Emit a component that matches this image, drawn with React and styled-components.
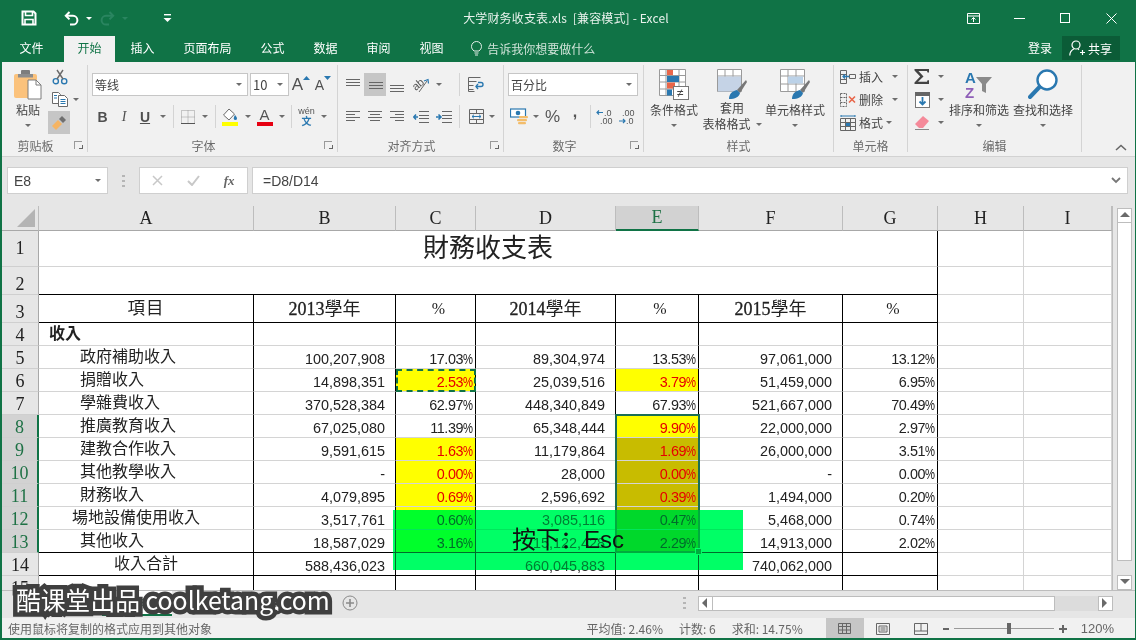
import React from 'react';
import styled, { createGlobalStyle } from 'styled-components';

const GREEN = '#107346';
const BLUE = '#2a78b0';
const UI = `"Noto Sans CJK SC", "Noto Sans", sans-serif`;
const TC = `"Noto Sans CJK TC", sans-serif`;
const SERIF = `"Liberation Serif", "Noto Sans CJK TC", serif`;

const GlobalStyle = createGlobalStyle`
  html, body { margin: 0; padding: 0; background: #fff; }
  body { font-family: ${UI}; }
`;

const Window = styled.div`
  position: relative;
  width: 1136px;
  height: 640px;
  box-sizing: border-box;
  border-left: 2px solid ${GREEN};
  border-right: 1px solid ${GREEN};
  border-bottom: 2px solid ${GREEN};
  display: flex;
  flex-direction: column;
  overflow: hidden;
  background: #e6e6e6;
`;

/* title bar */
const TitleBar = styled.div`
  height: 36px;
  flex: none;
  background: ${GREEN};
  display: grid;
  grid-template-columns: 1fr auto 1fr;
  align-items: center;
  padding-right: 5px;
  color: #fff;
`;
const Qat = styled.div`
  display: flex;
  align-items: center;
  padding-left: 18px;
`;
const QatSlot = styled.div`
  width: ${p => p.$w}px;
  height: 24px;
  display: flex;
  align-items: center;
  justify-content: center;
`;
const TitleText = styled.div`
  font-size: 12px;
  color: #e8f2ec;
  letter-spacing: 0.15px;
  white-space: pre;
  padding-bottom: 2px;
`;
const WinButtons = styled.div`
  display: flex;
  justify-content: flex-end;
  align-items: center;
  margin-right: -4px;
`;
const WinButton = styled.div`
  width: 46px;
  height: 30px;
  display: flex;
  align-items: center;
  justify-content: center;
`;

/* tabs */
const TabBar = styled.div`
  height: 26px;
  flex: none;
  background: ${GREEN};
  display: flex;
  align-items: stretch;
  padding-left: 4px;
  gap: 2px;
`;
const Tab = styled.div`
  padding: 0 13.5px;
  font-size: 12px;
  line-height: 24px;
  color: ${p => (p.$active ? GREEN : '#fff')};
  background: ${p => (p.$active ? '#f1f1f1' : 'transparent')};
  &:first-child {
    margin-right: 5px;
  }
`;
const Tell = styled.div`
  display: flex;
  align-items: center;
  gap: 5px;
  margin-left: 12px;
  font-size: 12px;
  color: #cfe3d8;
  padding-bottom: 2px;
`;
const TabRight = styled.div`
  margin-left: auto;
  display: flex;
  align-items: flex-start;
  padding-right: 15px;
  color: #fff;
  font-size: 12px;
`;
const Login = styled.div`
  line-height: 24px;
  margin-right: 10px;
`;
const Share = styled.div`
  width: 58px;
  height: 24px;
  background: #0b5c37;
  display: flex;
  align-items: center;
  gap: 3px;
  padding-left: 7px;
  box-sizing: border-box;
`;

/* ribbon */
const Ribbon = styled.div`
  height: 95px;
  flex: none;
  box-sizing: border-box;
  background: #f1f1f1;
  border-bottom: 1px solid #d2d2d2;
  display: flex;
  padding-top: 3px;
  position: relative;
`;
const Group = styled.div`
  width: ${p => p.$w}px;
  flex: none;
  box-sizing: border-box;
  height: 87px;
  border-right: 1px solid #d4d4d4;
  display: flex;
  flex-direction: column;
`;
const GroupBody = styled.div`
  height: 73px;
  display: flex;
  flex-direction: ${p => (p.$col ? 'column' : 'row')};
  gap: ${p => p.$gap || 0}px;
  padding: ${p => p.$pad || '0'};
  box-sizing: border-box;
`;
const GroupFoot = styled.div`
  height: 14px;
  display: grid;
  grid-template-columns: ${p => (p.$launch ? '1fr auto 1fr 18px' : '1fr auto 1fr')};
  align-items: center;
  font-size: 12px;
  line-height: 13px;
  color: #6b6b6b;
`;
const Launcher = styled.div`
  grid-column: 4;
  justify-self: end;
  margin-right: 5px;
  width: 7px;
  height: 7px;
  border-left: 1px solid #999;
  border-top: 1px solid #999;
  position: relative;
  &::after {
    content: '';
    position: absolute;
    right: -1px;
    bottom: 0;
    width: 3px;
    height: 3px;
    border-right: 1px solid #666;
    border-bottom: 1px solid #666;
  }
`;
const Row = styled.div`
  display: flex;
  align-items: center;
  height: ${p => p.$h || 23}px;
`;
const Slot = styled.div`
  width: ${p => p.$w}px;
  height: 23px;
  flex: none;
  display: flex;
  align-items: center;
  justify-content: center;
  background: ${p => (p.$on ? '#c6c6c6' : 'transparent')};
  color: #444;
`;
const Caret = styled.i`
  display: block;
  flex: none;
  width: 0;
  height: 0;
  border-left: 3.5px solid transparent;
  border-right: 3.5px solid transparent;
  border-top: 3.5px solid #6d6d6d;
  margin: ${p => p.$m || '0'};
`;
const CaretSlot = styled.div`
  width: ${p => p.$w || 12}px;
  flex: none;
  display: flex;
  justify-content: center;
`;
const Sep = styled.div`
  width: 1px;
  height: 23px;
  flex: none;
  background: #d4d4d4;
  margin: 0 ${p => p.$mr || 4}px 0 ${p => p.$ml || 4}px;
`;
const Combo = styled.div`
  width: ${p => p.$w}px;
  height: 23px;
  box-sizing: border-box;
  flex: none;
  background: #fff;
  border: 1px solid #c6c6c6;
  display: flex;
  align-items: center;
  justify-content: space-between;
  padding: 0 5px 0 2px;
  font-size: ${p => p.$fs || 12}px;
  color: #444;
  margin-right: ${p => p.$mr || 0}px;
`;
const Big = styled.div`
  width: ${p => p.$w}px;
  flex: none;
  display: flex;
  flex-direction: column;
  align-items: center;
  font-size: 12px;
  line-height: 16px;
  color: #444;
  white-space: nowrap;
`;
const BigIcon = styled.div`
  height: 32px;
  margin-top: 4px;
  margin-bottom: 1px;
  display: flex;
  align-items: center;
`;
const BigLine = styled.div`
  display: flex;
  align-items: center;
  gap: 5px;
  height: 16px;
  position: relative;
  top: -2px;
`;
const SmallLabel = styled.span`
  font-size: 12px;
  color: #444;
  margin-left: 2px;
  width: 24px;
`;
const FontA = styled.span`
  font-family: "Liberation Sans", sans-serif;
  font-size: ${p => p.$s}px;
  color: #505050;
`;
const StyleLetter = styled.span`
  font-family: ${p => (p.$serif ? '"Liberation Serif", serif' : '"Liberation Sans", sans-serif')};
  font-size: 14px;
  font-weight: ${p => (p.$bold ? 700 : 400)};
  font-style: ${p => (p.$italic ? 'italic' : 'normal')};
  text-decoration: ${p => (p.$under ? 'underline' : 'none')};
  color: #505050;
`;
const GlyphBtn = styled.span`
  font-family: "Liberation Sans", sans-serif;
  font-size: ${p => p.$s || 17}px;
  font-weight: ${p => p.$w || 400};
  color: #555;
  margin-bottom: ${p => p.$up || 0}px;
`;
const Collapse = styled.div`
  position: absolute;
  right: 8px;
  bottom: 5px;
  display: flex;
`;

/* formula bar */
const FormulaBar = styled.div`
  height: 49px;
  flex: none;
  box-sizing: border-box;
  padding: 10px 7px 0 5px;
  display: flex;
  align-items: flex-start;
`;
const NameBox = styled.div`
  width: 101px;
  height: 27px;
  box-sizing: border-box;
  flex: none;
  background: #fff;
  border: 1px solid #cfcfcf;
  display: flex;
  align-items: center;
  justify-content: space-between;
  padding: 0 6px;
  font-family: "Liberation Sans", sans-serif;
  font-size: 14px;
  color: #444;
`;
const Grip = styled.div`
  width: 31px;
  height: 27px;
  flex: none;
  display: flex;
  align-items: center;
  justify-content: center;
`;
const FxBox = styled.div`
  width: 109px;
  height: 27px;
  box-sizing: border-box;
  flex: none;
  background: #fff;
  border: 1px solid #cfcfcf;
  display: grid;
  grid-template-columns: 1fr 1fr 1fr;
  align-items: center;
  justify-items: center;
  margin-right: 4px;
`;
const FxText = styled.span`
  font-family: "Liberation Serif", serif;
  font-style: italic;
  font-weight: 700;
  font-size: 13px;
  color: #666;
`;
const FormulaInput = styled.div`
  flex: 1;
  height: 27px;
  box-sizing: border-box;
  background: #fff;
  border: 1px solid #cfcfcf;
  display: flex;
  align-items: center;
  justify-content: space-between;
  padding: 0 6px 0 10px;
  font-family: "Liberation Sans", sans-serif;
  font-size: 14px;
  color: #444;
`;

/* sheet */
const Stage = styled.div`
  height: 384px;
  flex: none;
  display: flex;
  overflow: hidden;
`;
const Sheet = styled.div`
  display: grid;
  grid-template-columns: 37px 215px 142px 80px 140px 83px 144px 95px 86px 88px;
  grid-template-rows: 25px 36px 28px 28px repeat(11, 23px) 23px;
  width: 1110px;
  flex: none;
  background: #fff;
  border-right: 1px solid #bdbdbd;
  align-self: flex-start;
`;
const Corner = styled.div`
  background: #e6e6e6;
  border-bottom: 1px solid #a8a8a8;
  border-right: 1px solid #bdbdbd;
  display: flex;
  align-items: flex-end;
  justify-content: flex-end;
  padding: 0 3px 3px 0;
  box-sizing: border-box;
`;
const ColHead = styled.div`
  background: ${p => (p.$on ? '#d2d2d2' : '#e6e6e6')};
  color: ${p => (p.$on ? '#1e7145' : '#222')};
  border-right: 1px solid #bdbdbd;
  border-bottom: ${p => (p.$on ? `2px solid ${GREEN}` : '1px solid #a8a8a8')};
  box-sizing: border-box;
  font-family: ${SERIF};
  font-size: 18px;
  display: flex;
  align-items: center;
  justify-content: center;
`;
const RowHead = styled.div`
  background: ${p => (p.$on ? '#d2d2d2' : '#e6e6e6')};
  color: ${p => (p.$on ? '#1e7145' : '#222')};
  border-right: ${p => (p.$on ? `2px solid ${GREEN}` : '1px solid #a8a8a8')};
  border-bottom: 1px solid #cfcfcf;
  box-sizing: border-box;
  font-family: ${SERIF};
  font-size: 18px;
  display: flex;
  align-items: ${p => (p.$mid ? 'center' : 'flex-end')};
  justify-content: center;
  line-height: 19px;
`;
const Cell = styled.div`
  box-sizing: border-box;
  position: relative;
  grid-column: ${p => (p.$span ? `span ${p.$span}` : 'auto')};
  background: ${p => p.$bg || '#fff'};
  color: ${p => p.$color || '#222'};
  border-right: 1px solid ${p => (p.$rb ? '#000' : '#d4d4d4')};
  border-bottom: 1px solid ${p => (p.$bb ? '#000' : '#d4d4d4')};
  font-size: 14.4px;
  line-height: 1;
  font-family: "Liberation Sans", sans-serif;
  display: flex;
  align-items: flex-end;
  justify-content: flex-end;
  padding: 0 ${p => p.$pr ?? 10}px 2px 0;
  white-space: nowrap;
  &.ants {
    outline: 2px dashed ${GREEN};
    outline-offset: -2px;
    z-index: 1;
  }
`;
const Caption = styled(Cell)`
  font-family: ${TC};
  font-size: 16px;
  font-weight: ${p => (p.$bold ? 700 : 400)};
  align-items: center;
  justify-content: ${p => (p.$center ? 'center' : 'flex-start')};
  padding: 0 0 4px ${p => p.$pl || 0}px;
`;
const Title = styled(Caption)`
  font-size: 26px;
  justify-content: center;
  padding: 0 0 5px;
`;
const HeadCell = styled(Cell)`
  font-family: ${SERIF};
  font-size: 18px;
  justify-content: center;
  align-items: center;
  padding: 0;
`;
const ItemHead = styled.span`
  letter-spacing: 1px;
  font-size: 17.5px;
`;
const YearNum = styled.span`
  -webkit-text-stroke: 0.3px #222;
`;
const PctHead = styled(HeadCell)`
  font-size: 16px;
  padding-left: 6px;
`;
const PctDigits = styled.span`
  letter-spacing: -0.45px;
`;
const PctSign = styled.span`
  display: inline-block;
  width: 10px;
  transform: scaleX(0.78);
  transform-origin: left bottom;
`;
const SelectBox = styled.div`
  position: absolute;
  left: -1px;
  top: -1px;
  width: 85px;
  height: 139px;
  box-sizing: border-box;
  border: 2px solid #1a6e55;
  pointer-events: none;
  z-index: 2;
`;
const FillHandle = styled.div`
  position: absolute;
  right: -4px;
  bottom: -4px;
  width: 5px;
  height: 5px;
  background: #1a6e55;
  border: 1px solid #fff;
`;

const VScroll = styled.div`
  width: 15px;
  margin-left: 4px;
  padding-top: 2px;
  display: flex;
  flex-direction: column;
`;
const ScrollBtn = styled.div`
  flex: none;
  width: ${p => p.$w || 15}px;
  height: 15px;
  box-sizing: border-box;
  background: #fff;
  border: 1px solid #bdbdbd;
  display: flex;
  align-items: center;
  justify-content: center;
`;
const VThumb = styled.div`
  flex: 1;
  background: #fff;
  border: 1px solid #bdbdbd;
  border-top: 0;
  margin-bottom: 14px;
`;

/* sheet tabs + scrollbar */
const SheetBar = styled.div`
  height: 28px;
  flex: none;
  box-sizing: border-box;
  display: flex;
  align-items: center;
  padding-bottom: 3px;
  border-top: 1px solid #bdbdbd;
  font-size: 12px;
  color: #444;
`;
const SheetTab = styled.div`
  width: 70px;
  height: 25px;
  box-sizing: border-box;
  display: flex;
  align-items: center;
  justify-content: center;
  font-family: "Liberation Sans", sans-serif;
  background: ${p => (p.$active ? '#fff' : 'transparent')};
  color: ${p => (p.$active ? GREEN : '#444')};
  border-bottom: ${p => (p.$active ? `2px solid ${GREEN}` : '0')};
`;
const Tabs = styled.div`
  display: flex;
  padding-left: 100px;
  width: 238px;
  flex: none;
`;
const AddSheet = styled.div`
  margin-left: 2px;
  display: flex;
`;
const HScroll = styled.div`
  margin-left: auto;
  margin-right: 22px;
  display: flex;
  align-items: center;
`;
const HGap = styled.span`
  width: 12px;
`;
const HThumb = styled.div`
  width: 342px;
  height: 15px;
  box-sizing: border-box;
  background: #fff;
  border-top: 1px solid #bdbdbd;
  border-bottom: 1px solid #bdbdbd;
  border-right: 1px solid #bdbdbd;
`;
const HTrack = styled.div`
  width: 43px;
  height: 15px;
  background: #dcdcdc;
`;

/* status bar */
const StatusBar = styled.div`
  height: 21px;
  flex: none;
  background: #f1f1f1;
  display: flex;
  align-items: center;
  font-size: 12px;
  color: #666;
  padding: 0 0 1px 6px;
`;
const StatusInfo = styled.div`
  margin-left: auto;
  display: flex;
  gap: 16px;
  margin-right: 23px;
  font-family: ${UI};
`;
const ViewBtn = styled.div`
  width: 38px;
  height: 21px;
  display: flex;
  align-items: center;
  justify-content: center;
  background: ${p => (p.$on ? '#c6c6c6' : 'transparent')};
`;
const Zoomer = styled.div`
  display: flex;
  align-items: center;
  margin-left: 3px;
  color: #666;
`;
const Track = styled.div`
  width: 100px;
  height: 1px;
  background: #9a9a9a;
  margin: 0 5px;
  display: flex;
  align-items: center;
  justify-content: center;
`;
const Knob = styled.div`
  width: 4px;
  height: 11px;
  background: #666;
  flex: none;
  margin-left: 10px;
`;
const ZoomPct = styled.span`
  margin-left: 14px;
  margin-right: 21px;
  font-family: "Liberation Sans", sans-serif;
  font-size: 13px;
`;

/* overlays */
const HintTint = styled.div`
  position: absolute;
  left: 391px;
  top: 510px;
  width: 350px;
  height: 60px;
  background: #00ff66;
  mix-blend-mode: multiply;
  z-index: 5;
`;
const KeyHint = styled.div`
  position: absolute;
  left: 391px;
  top: 510px;
  width: 350px;
  height: 60px;
  background: rgba(0, 255, 102, 0.42);
  color: #111;
  font-family: "Liberation Sans", ${UI};
  font-size: 24px;
  line-height: 60px;
  text-align: center;
  z-index: 5;
`;
const Watermark = styled.div`
  position: absolute;
  left: 14px;
  top: 580px;
  font-size: 24.8px;
  line-height: 38px;
  color: #fff;
  white-space: pre;
  -webkit-text-stroke: 9px #3f3f3f;
  paint-order: stroke fill;
  stroke-linejoin: round;
  z-index: 6;
`;

/* icons */
const SaveIcon = () => (
  <svg width="16" height="16" viewBox="0 0 16 16" fill="none" stroke="#fff" strokeWidth="2">
    <path d="M1.5 1.5h11l2 2v11h-13z" />
    <path d="M4.5 1.5v4h7v-4M4 14.5v-5h8v5" strokeWidth="1.6" />
  </svg>
);
const UndoIcon = ({ c = '#fff', flip }) => (
  <svg width="16" height="15" viewBox="0 0 16 15" fill="none" stroke={c} strokeWidth="2" style={flip ? { transform: 'scaleX(-1)' } : undefined}>
    <path d="M5.5 1 1.8 4.8l3.7 3.6" />
    <path d="M2 4.8h7a4.4 4.4 0 0 1 0 8.8H6" />
  </svg>
);
const QatCaret = styled(Caret)`
  border-top-color: ${p => p.$c || '#fff'};
`;
const CustomizeIcon = () => (
  <svg width="9" height="9" viewBox="0 0 9 9" fill="#fff">
    <rect x="1" y="0" width="7" height="1.4" />
    <path d="M0.5 4h8L4.5 8z" />
  </svg>
);
const PasteIcon = () => (
  <svg width="30" height="32" viewBox="0 0 30 32">
    <rect x="1" y="5" width="23" height="24" rx="2" fill="#fbc27c" />
    <rect x="8" y="1" width="9" height="7" rx="1" fill="#7d7d7d" />
    <rect x="5" y="5" width="15" height="3.5" fill="#8d8d8d" />
    <path d="M15 11h8l5 5v14H15z" fill="#fff" stroke="#7d7d7d" />
    <path d="M23 11v5h5" fill="none" stroke="#7d7d7d" />
  </svg>
);
const ScissorsIcon = () => (
  <svg width="16" height="16" viewBox="0 0 16 16" fill="none">
    <circle cx="3.8" cy="12.2" r="2.6" stroke={BLUE} strokeWidth="1.4" />
    <circle cx="12.2" cy="12.2" r="2.6" stroke={BLUE} strokeWidth="1.4" />
    <path d="M5 10 11 1M11 10 5 1" stroke="#6a6a6a" strokeWidth="1.4" />
  </svg>
);
const CopyIcon = () => (
  <svg width="16" height="15" viewBox="0 0 16 15" fill="#fff" stroke="#6a6a6a">
    <path d="M.5.5h6l2 2v9H.5z" />
    <path d="M6.5 3.5h6l3 3v8h-9z" />
    <path d="M2 3.5h3M2 6h3M8.500 7.500h5M8.500 9.500h5M8.500 11.500h5" stroke={BLUE} />
  </svg>
);
const PainterIcon = () => (
  <svg width="16" height="16" viewBox="0 0 16 16">
    <path d="M1 11 7 5l4 4-6 6z" fill="#f5b463" />
    <path d="M8 4l3-3 4 4-3 3z" fill="#6f6f6f" />
  </svg>
);
const CaretUp = ({ c = BLUE }) => (
  <svg width="7" height="5" viewBox="0 0 7 5" style={{ alignSelf: 'flex-start', marginTop: 3 }}><path d="M0 4h7L3.5 0z" fill={c} /></svg>
);
const CaretDownBlue = () => (
  <svg width="7" height="5" viewBox="0 0 7 5" style={{ alignSelf: 'flex-start', marginTop: 3 }}><path d="M0 0h7L3.500 4z" fill={BLUE} /></svg>
);
const BordersIcon = () => (
  <svg width="14" height="14" viewBox="0 0 14 14" fill="none" stroke="#999" strokeDasharray="1 1">
    <path d="M.5.500h13v13H.5zM7 .5v13M.5 7h13" />
    <path d="M0 13.500h14" strokeDasharray="none" stroke="#555" />
  </svg>
);
const FillIcon = () => (
  <svg width="18" height="18" viewBox="0 0 18 18">
    <path d="M7 1 1.5 7 7 12l5.500-6z" fill="#fff" stroke="#6a6a6a" />
    <path d="M13 7s2 2.200 2 3.400a1.600 1.600 0 0 1-3.200 0C11.800 9.200 13 7 13 7z" fill={BLUE} />
    <rect x="0" y="14" width="16" height="4" fill="#ffff00" />
  </svg>
);
const ColorWrap = styled.div`
  display: block;
`;
const ColorA = styled.span`
  display: block;
  font-family: "Liberation Sans", sans-serif;
  font-size: 15px;
  line-height: 14px;
  text-align: center;
  color: #555;
  width: 16px;
`;
const ColorBar = styled.div`
  width: 16px;
  height: 4px;
  background: #e60012;
`;
const FontColorIcon = () => (
  <ColorWrap>
    <ColorA>A</ColorA>
    <ColorBar />
  </ColorWrap>
);
const WenText = styled.div`
  font-family: "Liberation Sans", sans-serif;
  font-size: 9px;
  line-height: 9px;
  color: #555;
  text-align: center;
`;
const WenChar = styled.div`
  font-size: 10px;
  line-height: 10px;
  color: ${BLUE};
  text-align: center;
  font-weight: 700;
`;
const LinesIcon = ({ rows, w = 15, h = 20 }) => (
  <svg width={w} height={h} viewBox={`0 0 ${w} ${h}`} stroke="#666">
    {rows.map(([a, b, y], i) => <line key={i} x1={a} x2={b} y1={y + 0.5} y2={y + 0.5} />)}
  </svg>
);
const OrientText = styled.span`
  display: block;
  font-family: "Liberation Sans", sans-serif;
  font-size: 11px;
  line-height: 11px;
  color: #555;
  transform: rotate(-40deg);
  margin-right: -6px;
`;
const OrientIcon = () => (
  <>
    <OrientText>ab</OrientText>
    <svg width="12" height="16" viewBox="0 0 12 16" fill="none">
      <path d="M1 15 9 4" stroke="#666" />
      <path d="M6 4l4-1.500.5 4" stroke={BLUE} strokeWidth="1.200" />
    </svg>
  </>
);
const WrapIcon = () => (
  <svg width="16" height="15" viewBox="0 0 16 15" fill="none" stroke="#666">
    <path d="M.5.500h12M.5 4.500h8M.5 8.500h5M.5 12.500h5" />
    <path d="M.5.500v14h6" />
    <path d="M8 9.500h5a2 2 0 0 0 0-4H10" stroke={BLUE} strokeWidth="1.400" />
    <path d="M10 7 8 9.500l2 2.500" stroke={BLUE} strokeWidth="1.400" />
  </svg>
);
const MergeIcon = () => (
  <svg width="15" height="15" viewBox="0 0 15 15" fill="none" stroke="#666">
    <path d="M.5.500h14v14H.5zM.5 4.500h14M.5 10.500h14M7.500.500v4M7.500 10.500v4" />
    <path d="M3 7.500h9M5 5.700 3 7.500l2 1.800M10 5.700l2 1.800-2 1.800" stroke={BLUE} />
  </svg>
);
const IndentIcon = ({ out }) => (
  <svg width="16" height="12" viewBox="0 0 16 12" fill="none">
    <path d="M6 .500h10M6 4.500h10M6 7.500h10M6 11.500h10" stroke="#666" />
    <path d={out ? 'M5 6H1M3 3.500 .8 6 3 8.500' : 'M0 6h4.500M2.500 3.500 5 6 2.500 8.500'} stroke={BLUE} strokeWidth="1.600" />
  </svg>
);
const CurrencyIcon = () => (
  <svg width="19" height="17" viewBox="0 0 19 17">
    <rect x=".5" y="1" width="15" height="8" fill="#fff" stroke={BLUE} strokeWidth="1.200" />
    <circle cx="8" cy="5" r="2.300" fill={BLUE} />
    <rect x="9" y="8" width="9" height="2.200" rx="1" fill="#f3bd6b" />
    <rect x="7" y="11" width="10" height="2.200" rx="1" fill="#f3bd6b" />
    <rect x="8" y="14" width="8" height="2.200" rx="1" fill="#f3bd6b" />
  </svg>
);
const DecIcon = ({ more }) => (
  <svg width="19" height="16" viewBox="0 0 19 16" fontFamily="Liberation Sans" fontSize="9" fill="#555">
    {more ? (
      <>
        <text x="8" y="7">.0</text>
        <text x="4" y="15">.00</text>
        <path d="M7 3.500H1M3 1.500 1 3.500l2 2" stroke={BLUE} strokeWidth="1.200" fill="none" />
      </>
    ) : (
      <>
        <text x="4" y="7">.00</text>
        <text x="8" y="15">.0</text>
        <path d="M1 12h6M5 10l2 2-2 2" stroke={BLUE} strokeWidth="1.200" fill="none" />
      </>
    )}
  </svg>
);
const CondIcon = () => (
  <svg width="30" height="32" viewBox="0 0 30 32">
    <path d="M.5.500h26v26H.5zM.5 6.500h26M.5 13h26M.5 20h26M7 .5v26M20 .5v26" fill="#fff" stroke="#9a9a9a" />
    <rect x="8" y="1" width="6" height="5" fill="#e8664a" />
    <rect x="8" y="7" width="12" height="6" fill={BLUE} />
    <rect x="8" y="13.500" width="8" height="6" fill="#e8664a" />
    <rect x="8" y="20.500" width="5" height="6" fill={BLUE} />
    <rect x="14.500" y="17.500" width="15" height="13" fill="#fff" stroke="#777" />
    <text x="18" y="28" fontFamily="Liberation Sans" fontSize="12" fill="#444">≠</text>
  </svg>
);
const TableFmtIcon = ({ plain }) => (
  <svg width="30" height="32" viewBox="0 0 30 32">
    <path d="M.5.500h24v22H.5zM.5 7h24M.5 15h24M8 .5v22M16 .5v22" fill="#fff" stroke="#9a9a9a" />
    <rect x={plain ? 8 : 1} y="7.500" width={plain ? 15 : 23} height={plain ? 7 : 15} fill={plain ? '#bcd2e8' : '#c5d3e6'} />
    <path d="M29 11 20 21l3 3 7-11z" fill="#777" />
    <path d="M12 30c0-5 3-8 8-9l3 3c-1 4-5 6-11 6z" fill={BLUE} />
  </svg>
);
const CellInsIcon = () => (
  <svg width="16" height="16" viewBox="0 0 16 16" fill="none" stroke="#666">
    <path d="M.5 1.500h6v13h-6zM.5 5.500h6M.5 10.500h6" />
    <path d="M9.500 5.500h6v4h-6z" />
    <path d="M9 7.500H3M5 5.500l-2 2 2 2" stroke={BLUE} strokeWidth="1.300" />
  </svg>
);
const CellDelIcon = () => (
  <svg width="16" height="16" viewBox="0 0 16 16" fill="none" stroke="#666">
    <path d="M.5 1.500h6v13h-6zM.5 5.500h6M.5 10.500h6" strokeDasharray="2 1" />
    <path d="M9 4.500l6 6M15 4.500l-6 6" stroke="#e8664a" strokeWidth="1.600" />
  </svg>
);
const CellFmtIcon = () => (
  <svg width="16" height="16" viewBox="0 0 16 16" fill="none" stroke="#666">
    <path d="M.5 3.500h15v12H.5zM.5 7.500h15M.5 11.500h15M5.500 3.500v12M10.500 3.500v12" />
    <rect x="6" y="8" width="4" height="3" fill={BLUE} stroke="none" />
    <path d="M1 1h14M1 0v2M15 0v2" stroke={BLUE} />
  </svg>
);
const SigmaIcon = () => (
  <svg width="16" height="15" viewBox="0 0 16 15"><path d="M.5 0H15v3.500h-1.500L13 2H4.500l5 5.500-5.500 5.300h9l.5-1.500H15V15H.5v-1.600L6.200 7.600.5 1.500z" fill="#444" /></svg>
);
const FillDownIcon = () => (
  <svg width="15" height="16" viewBox="0 0 15 16">
    <rect x=".5" y=".5" width="14" height="15" fill="#fff" stroke="#777" />
    <rect x="0" y="0" width="15" height="4" fill="#666" />
    <path d="M7.500 5v7M4.500 9.500l3 3 3-3" fill="none" stroke={BLUE} strokeWidth="1.800" />
  </svg>
);
const EraserIcon = () => (
  <svg width="15" height="14" viewBox="0 0 15 14">
    <path d="M0 8 8 0l6 5-6 7H4z" fill="#f58a9a" />
    <path d="M0 13.500h14" stroke="#888" />
  </svg>
);
const SortLetters = styled.div`
  font-family: "Liberation Sans", sans-serif;
  font-weight: 700;
  font-size: 15px;
  line-height: 15px;
  margin-right: -1px;
`;
const SortLetter = styled.div`
  color: ${p => p.$c};
`;
const SortIcon = () => (
  <>
    <SortLetters><SortLetter $c={BLUE}>A</SortLetter><SortLetter $c="#8f5fb8">Z</SortLetter></SortLetters>
    <svg width="18" height="18" viewBox="0 0 18 18"><path d="M1 1h16l-6 7v9l-4-2V8z" fill="#8a8a8a" /></svg>
  </>
);
const FindIcon = () => (
  <svg width="30" height="32" viewBox="0 0 30 32" fill="none">
    <circle cx="19" cy="11" r="9.500" stroke={BLUE} strokeWidth="2.400" fill="#fff" />
    <path d="M11.500 18 2 28" stroke={BLUE} strokeWidth="4" strokeLinecap="round" />
  </svg>
);
const BulbIcon = () => (
  <svg width="11" height="15" viewBox="0 0 11 15" fill="none" stroke="#e4efe9">
    <path d="M3 10C1.500 8.500.5 7.500.5 5.500a5 5 0 0 1 10 0c0 2-1 3-2.500 4.500z" />
    <path d="M3.500 12h4M4 14h3" />
  </svg>
);
const PersonIcon = () => (
  <svg width="16" height="16" viewBox="0 0 16 16" fill="none" stroke="#fff" strokeWidth="1.200">
    <circle cx="7" cy="5" r="4" />
    <path d="M.8 15.500c0-3.500 2-5.500 4-6.500M9 9l1 .7M11 12.500h5M13.500 10v5" />
  </svg>
);
const GripDots = () => (
  <svg width="3" height="12" viewBox="0 0 3 12" fill="#b5b5b5">
    <rect y="0" width="3" height="2" /><rect y="5" width="3" height="2" /><rect y="10" width="3" height="2" />
  </svg>
);
const Arrow = ({ dir }) => {
  const d = { up: 'M0 6h10L5 1z', down: 'M0 1h10L5 6z', left: 'M6 0v10L1 5z', right: 'M1 0v10L6 5z' }[dir];
  return <svg width="10" height="10" viewBox="0 0 10 10"><path d={d} fill="#6a6a6a" /></svg>;
};

/* sheet data */
const YELLOW = '#ffff00';
const SHADE_Y = '#c8bc00';
const RED = '#e60000';

const rowsData = [
  { n: 5, label: '政府補助收入', pl: 41, v: ['100,207,908', '17.03', '89,304,974', '13.53', '97,061,000', '13.12'] },
  { n: 6, label: '捐贈收入', pl: 41, v: ['14,898,351', '2.53', '25,039,516', '3.79', '51,459,000', '6.95'], cy: true, ey: true, ants: true },
  { n: 7, label: '學雜費收入', pl: 41, v: ['370,528,384', '62.97', '448,340,849', '67.93', '521,667,000', '70.49'] },
  { n: 8, label: '推廣教育收入', pl: 41, v: ['67,025,080', '11.39', '65,348,444', '9.90', '22,000,000', '2.97'], ey: true, active: true, on: true },
  { n: 9, label: '建教合作收入', pl: 41, v: ['9,591,615', '1.63', '11,179,864', '1.69', '26,000,000', '3.51'], cy: true, ey: true, shade: true, on: true },
  { n: 10, label: '其他教學收入', pl: 41, v: ['-', '0.00', '28,000', '0.00', '-', '0.00'], cy: true, ey: true, shade: true, on: true },
  { n: 11, label: '財務收入', pl: 41, v: ['4,079,895', '0.69', '2,596,692', '0.39', '1,494,000', '0.20'], cy: true, ey: true, shade: true, on: true },
  { n: 12, label: '場地設備使用收入', pl: 33, v: ['3,517,761', '0.60', '3,085,116', '0.47', '5,468,000', '0.74'], cy: true, ey: true, shade: true, on: true },
  { n: 13, label: '其他收入', pl: 41, v: ['18,587,029', '3.16', '15,122,428', '2.29', '14,913,000', '2.02'], cy: true, ey: true, shade: true, on: true, last: true },
];

const Pct = ({ v }) => <><PctDigits>{v}</PctDigits><PctSign>%</PctSign></>;

const DataRow = ({ r }) => {
  const eBg = r.shade ? SHADE_Y : r.ey ? YELLOW : undefined;
  return (
    <>
      <RowHead $on={r.on}>{r.n}</RowHead>
      <Caption $rb $bb={r.last} $pl={r.pl}>{r.label}</Caption>
      <Cell $rb $bb={r.last}>{r.v[0]}</Cell>
      <Cell $rb $bb={r.last} $pr={2} $bg={r.cy ? YELLOW : undefined} $color={r.cy ? RED : undefined} className={r.ants ? 'ants' : undefined}><Pct v={r.v[1]} /></Cell>
      <Cell $rb $bb={r.last}>{r.v[2]}</Cell>
      <Cell $rb $bb={r.last} $pr={2} $bg={eBg} $color={r.ey ? RED : undefined}>
        <Pct v={r.v[3]} />
        {r.active && <SelectBox><FillHandle /></SelectBox>}
      </Cell>
      <Cell $rb $bb={r.last}>{r.v[4]}</Cell>
      <Cell $rb $bb={r.last} $pr={2}><Pct v={r.v[5]} /></Cell>
      <Cell />
      <Cell />
    </>
  );
};

const SheetGrid = () => (
  <Sheet>
    <Corner><svg width="18" height="18" viewBox="0 0 18 18"><path d="M18 0v18H0z" fill="#b4b4b4" /></svg></Corner>
    {['A', 'B', 'C', 'D', 'E', 'F', 'G', 'H', 'I'].map(c => <ColHead key={c} $on={c === 'E'}>{c}</ColHead>)}

    <RowHead $mid>1</RowHead>
    <Title $span={7} $rb>財務收支表</Title>
    <Cell /><Cell />

    <RowHead>2</RowHead>
    <Cell $span={7} $rb $bb />
    <Cell /><Cell />

    <RowHead>3</RowHead>
    <HeadCell $rb $bb><ItemHead>項目</ItemHead></HeadCell>
    <HeadCell $rb $bb><YearNum>2013</YearNum>學年</HeadCell>
    <PctHead $rb $bb>%</PctHead>
    <HeadCell $rb $bb><YearNum>2014</YearNum>學年</HeadCell>
    <PctHead $rb $bb>%</PctHead>
    <HeadCell $rb $bb><YearNum>2015</YearNum>學年</HeadCell>
    <PctHead $rb $bb>%</PctHead>
    <Cell /><Cell />

    <RowHead>4</RowHead>
    <Caption $rb $bold $pl={10}>收入</Caption>
    <Cell $rb /><Cell $rb /><Cell $rb /><Cell $rb /><Cell $rb /><Cell $rb />
    <Cell /><Cell />

    {rowsData.map(r => <DataRow key={r.n} r={r} />)}

    <RowHead>14</RowHead>
    <Caption $rb $bb $center>收入合計</Caption>
    <Cell $rb $bb>588,436,023</Cell>
    <Cell $rb $bb />
    <Cell $rb $bb>660,045,883</Cell>
    <Cell $rb $bb />
    <Cell $rb $bb>740,062,000</Cell>
    <Cell $rb $bb />
    <Cell /><Cell />

    <RowHead>15</RowHead>
    <Cell $rb /><Cell $rb /><Cell $rb /><Cell $rb /><Cell $rb /><Cell $rb /><Cell $rb />
    <Cell /><Cell />
  </Sheet>
);

const Foot = ({ children, launcher }) => (
  <GroupFoot $launch={launcher}>
    <span />
    <span>{children}</span>
    <span />
    {launcher && <Launcher />}
  </GroupFoot>
);

export default function App() {
  return (
    <>
      <GlobalStyle />
      <Window>
        <TitleBar>
          <Qat>
            <QatSlot $w={18}><SaveIcon /></QatSlot>
            <QatSlot $w={24} />
            <QatSlot $w={20}><UndoIcon /></QatSlot>
            <QatSlot $w={14}><QatCaret /></QatSlot>
            <QatSlot $w={22}><UndoIcon c="#2a8560" flip /></QatSlot>
            <QatSlot $w={14}><QatCaret $c="#2a8560" /></QatSlot>
            <QatSlot $w={28} />
            <QatSlot $w={14}><CustomizeIcon /></QatSlot>
          </Qat>
          <TitleText>大学财务收支表.xls  [兼容模式] - Excel</TitleText>
          <WinButtons>
            <WinButton>
              <svg width="13" height="11" viewBox="0 0 13 11" fill="none" stroke="#fff"><path d="M.5.500h12v10H.5zM.5 3h12M6.500 9V4.500M4.500 6.500l2-2 2 2" /></svg>
            </WinButton>
            <WinButton><svg width="11" height="1" viewBox="0 0 11 1"><rect width="11" height="1" fill="#fff" /></svg></WinButton>
            <WinButton><svg width="10" height="10" viewBox="0 0 10 10" fill="none" stroke="#fff"><rect x=".5" y=".5" width="9" height="9" /></svg></WinButton>
            <WinButton><svg width="11" height="11" viewBox="0 0 11 11" stroke="#fff"><path d="M.5.500l10 10M10.500.500l-10 10" /></svg></WinButton>
          </WinButtons>
        </TitleBar>

        <TabBar>
          <Tab>文件</Tab>
          <Tab $active>开始</Tab>
          <Tab>插入</Tab>
          <Tab>页面布局</Tab>
          <Tab>公式</Tab>
          <Tab>数据</Tab>
          <Tab>审阅</Tab>
          <Tab>视图</Tab>
          <Tell><BulbIcon />告诉我你想要做什么</Tell>
          <TabRight>
            <Login>登录</Login>
            <Share><PersonIcon />共享</Share>
          </TabRight>
        </TabBar>

        <Ribbon>
          <Group $w={86}>
            <GroupBody $pad="0 0 0 6px">
              <Big $w={40}>
                <BigIcon><PasteIcon /></BigIcon>
                <div>粘贴</div>
                <Caret $m="6px 0 0 0" />
              </Big>
              <div>
                <Row><Slot $w={24}><ScissorsIcon /></Slot></Row>
                <Row><Slot $w={24}><CopyIcon /></Slot><CaretSlot $w={8}><Caret /></CaretSlot></Row>
                <Row><Slot $w={22} $on><PainterIcon /></Slot></Row>
              </div>
            </GroupBody>
            <Foot launcher>剪贴板</Foot>
          </Group>

          <Group $w={250}>
            <GroupBody $col $gap={9} $pad="8px 0 0 4px">
              <Row>
                <Combo $w={156} $mr={2}>等线<Caret /></Combo>
                <Combo $w={39} $fs={13}>10<Caret /></Combo>
                <Slot $w={24}><FontA $s={17}>A</FontA><CaretUp /></Slot>
                <Slot $w={20}><FontA $s={14}>A</FontA><CaretDownBlue /></Slot>
              </Row>
              <Row>
                <Slot $w={21}><StyleLetter $bold>B</StyleLetter></Slot>
                <Slot $w={22}><StyleLetter $italic $serif>I</StyleLetter></Slot>
                <Slot $w={20}><StyleLetter $bold $under>U</StyleLetter></Slot>
                <CaretSlot $w={15}><Caret /></CaretSlot>
                <Sep $ml={3} $mr={3} />
                <Slot $w={22}><BordersIcon /></Slot>
                <CaretSlot $w={12}><Caret /></CaretSlot>
                <Sep $ml={4} $mr={4} />
                <Slot $w={22}><FillIcon /></Slot>
                <CaretSlot $w={11}><Caret /></CaretSlot>
                <Slot $w={23}><FontColorIcon /></Slot>
                <CaretSlot $w={12}><Caret /></CaretSlot>
                <Sep $ml={3} $mr={3} />
                <Slot $w={23}><div><WenText>wén</WenText><WenChar>文</WenChar></div></Slot>
                <CaretSlot $w={12}><Caret /></CaretSlot>
              </Row>
            </GroupBody>
            <Foot launcher>字体</Foot>
          </Group>

          <Group $w={166}>
            <GroupBody $col $gap={9} $pad="8px 0 0 4px">
              <Row>
                <Slot $w={22}><LinesIcon rows={[[0, 14, 4], [0, 14, 7], [0, 14, 10]]} /></Slot>
                <Slot $w={22} $on><LinesIcon rows={[[1, 15, 7], [1, 15, 10], [1, 15, 13]]} /></Slot>
                <Slot $w={22}><LinesIcon rows={[[0, 14, 10], [0, 14, 13], [0, 14, 16]]} /></Slot>
                <Slot $w={26}><OrientIcon /></Slot>
                <CaretSlot $w={10}><Caret /></CaretSlot>
                <Sep $ml={15} $mr={5} />
                <Slot $w={22}><WrapIcon /></Slot>
              </Row>
              <Row>
                <Slot $w={22}><LinesIcon rows={[[0, 14, 4], [0, 9, 7], [0, 14, 10], [0, 9, 13]]} /></Slot>
                <Slot $w={22}><LinesIcon rows={[[0, 14, 4], [2, 12, 7], [0, 14, 10], [2, 12, 13]]} /></Slot>
                <Slot $w={22}><LinesIcon rows={[[0, 14, 4], [5, 14, 7], [0, 14, 10], [5, 14, 13]]} /></Slot>
                <Slot $w={25}><IndentIcon out /></Slot>
                <Slot $w={22}><IndentIcon /></Slot>
                <Sep $ml={4} $mr={5} />
                <Slot $w={22}><MergeIcon /></Slot>
                <CaretSlot $w={10}><Caret /></CaretSlot>
              </Row>
            </GroupBody>
            <Foot launcher>对齐方式</Foot>
          </Group>

          <Group $w={140}>
            <GroupBody $col $gap={9} $pad="8px 0 0 4px">
              <Row><Combo $w={130}>百分比<Caret /></Combo></Row>
              <Row>
                <Slot $w={22}><CurrencyIcon /></Slot>
                <CaretSlot $w={11}><Caret /></CaretSlot>
                <Slot $w={23}><GlyphBtn>%</GlyphBtn></Slot>
                <Slot $w={22}><GlyphBtn $w={700} $s={16} $up={9}>,</GlyphBtn></Slot>
                <Sep $ml={4} $mr={3} />
                <Slot $w={22}><DecIcon more /></Slot>
                <Slot $w={22}><DecIcon /></Slot>
              </Row>
            </GroupBody>
            <Foot launcher>数字</Foot>
          </Group>

          <Group $w={190}>
            <GroupBody>
              <Big $w={60}>
                <BigIcon><CondIcon /></BigIcon>
                <div>条件格式</div>
                <Caret $m="6px 0 0 0" />
              </Big>
              <Big $w={56}>
                <BigIcon><TableFmtIcon /></BigIcon>
                <BigLine>套用</BigLine>
                <BigLine>表格格式<Caret /></BigLine>
              </Big>
              <Big $w={70}>
                <BigIcon><TableFmtIcon plain /></BigIcon>
                <div>单元格样式</div>
                <Caret $m="6px 0 0 0" />
              </Big>
            </GroupBody>
            <Foot>样式</Foot>
          </Group>

          <Group $w={74}>
            <GroupBody $col $pad="0 0 0 4px">
              <Row><Slot $w={19}><CellInsIcon /></Slot><SmallLabel>插入</SmallLabel><CaretSlot $w={24}><Caret /></CaretSlot></Row>
              <Row><Slot $w={19}><CellDelIcon /></Slot><SmallLabel>删除</SmallLabel><CaretSlot $w={24}><Caret /></CaretSlot></Row>
              <Row><Slot $w={19}><CellFmtIcon /></Slot><SmallLabel>格式</SmallLabel><CaretSlot $w={12}><Caret /></CaretSlot></Row>
            </GroupBody>
            <Foot>单元格</Foot>
          </Group>

          <Group $w={174}>
            <GroupBody>
              <div>
                <Row><Slot $w={28}><SigmaIcon /></Slot><CaretSlot $w={10}><Caret /></CaretSlot></Row>
                <Row><Slot $w={28}><FillDownIcon /></Slot><CaretSlot $w={10}><Caret /></CaretSlot></Row>
                <Row><Slot $w={28}><EraserIcon /></Slot><CaretSlot $w={10}><Caret /></CaretSlot></Row>
              </div>
              <Big $w={3} />
              <Big $w={60}>
                <BigIcon><SortIcon /></BigIcon>
                <div>排序和筛选</div>
                <Caret $m="6px 0 0 0" />
              </Big>
              <Big $w={68}>
                <BigIcon><FindIcon /></BigIcon>
                <div>查找和选择</div>
                <Caret $m="6px 0 0 0" />
              </Big>
            </GroupBody>
            <Foot>编辑</Foot>
          </Group>

          <Collapse>
            <svg width="12" height="7" viewBox="0 0 12 7" fill="none" stroke="#666" strokeWidth="1.500"><path d="M1 6 6 1.500 11 6" /></svg>
          </Collapse>
        </Ribbon>

        <FormulaBar>
          <NameBox>E8<Caret /></NameBox>
          <Grip><GripDots /></Grip>
          <FxBox>
            <svg width="11" height="11" viewBox="0 0 11 11" stroke="#c8c8c8" strokeWidth="1.500"><path d="M1 1l9 9M10 1l-9 9" /></svg>
            <svg width="13" height="11" viewBox="0 0 13 11" fill="none" stroke="#c8c8c8" strokeWidth="2"><path d="M1 6l4 4 7-9" /></svg>
            <FxText>fx</FxText>
          </FxBox>
          <FormulaInput>
            =D8/D14
            <svg width="10" height="7" viewBox="0 0 10 7" fill="none" stroke="#777" strokeWidth="1.800"><path d="M1 1l4 4 4-4" /></svg>
          </FormulaInput>
        </FormulaBar>

        <Stage>
          <SheetGrid />
          <VScroll>
            <ScrollBtn><Arrow dir="up" /></ScrollBtn>
            <VThumb />
            <ScrollBtn><Arrow dir="down" /></ScrollBtn>
          </VScroll>
        </Stage>

        <SheetBar>
          <Tabs>
            <SheetTab $active>Sheet1</SheetTab>
            <SheetTab>Sheet2</SheetTab>
            <SheetTab>Sheet3</SheetTab>
          </Tabs>
          <AddSheet>
            <svg width="16" height="16" viewBox="0 0 16 16" fill="none" stroke="#8a8a8a"><circle cx="8" cy="8" r="7" /><path d="M8 4v8M4 8h8" strokeWidth="1.600" /></svg>
          </AddSheet>
          <HScroll>
            <GripDots />
            <HGap />
            <ScrollBtn><Arrow dir="left" /></ScrollBtn>
            <HThumb />
            <HTrack />
            <ScrollBtn><Arrow dir="right" /></ScrollBtn>
          </HScroll>
        </SheetBar>

        <StatusBar>
          使用鼠标将复制的格式应用到其他对象
          <StatusInfo>
            <span>平均值: 2.46%</span>
            <span>计数: 6</span>
            <span>求和: 14.75%</span>
          </StatusInfo>
          <ViewBtn $on>
            <svg width="13" height="11" viewBox="0 0 13 11" fill="none" stroke="#666"><path d="M.5.500h12v10H.5zM4.500.500v10M8.500.500v10M.5 3.500h12M.5 7h12" /></svg>
          </ViewBtn>
          <ViewBtn>
            <svg width="14" height="12" viewBox="0 0 14 12" fill="none" stroke="#666"><path d="M.5.500h13v11H.5zM3 3h8v6H3zM4.500 5h5M4.500 7h5" /></svg>
          </ViewBtn>
          <ViewBtn>
            <svg width="14" height="12" viewBox="0 0 14 12" fill="none" stroke="#666"><path d="M.5.500h13v11H.5zM.5 8h13M7 .5V8" /></svg>
          </ViewBtn>
          <Zoomer>
            <svg width="6" height="2" viewBox="0 0 6 2"><rect width="6" height="2" fill="#666" /></svg>
            <Track><Knob /></Track>
            <svg width="8" height="8" viewBox="0 0 8 8" fill="#666"><path d="M3 0h2v3h3v2H5v3H3V5H0V3h3z" /></svg>
            <ZoomPct>120%</ZoomPct>
          </Zoomer>
        </StatusBar>

        <HintTint />
        <KeyHint>按下：Esc</KeyHint>
        <Watermark>酷课堂出品 coolketang.com</Watermark>
      </Window>
    </>
  );
}
